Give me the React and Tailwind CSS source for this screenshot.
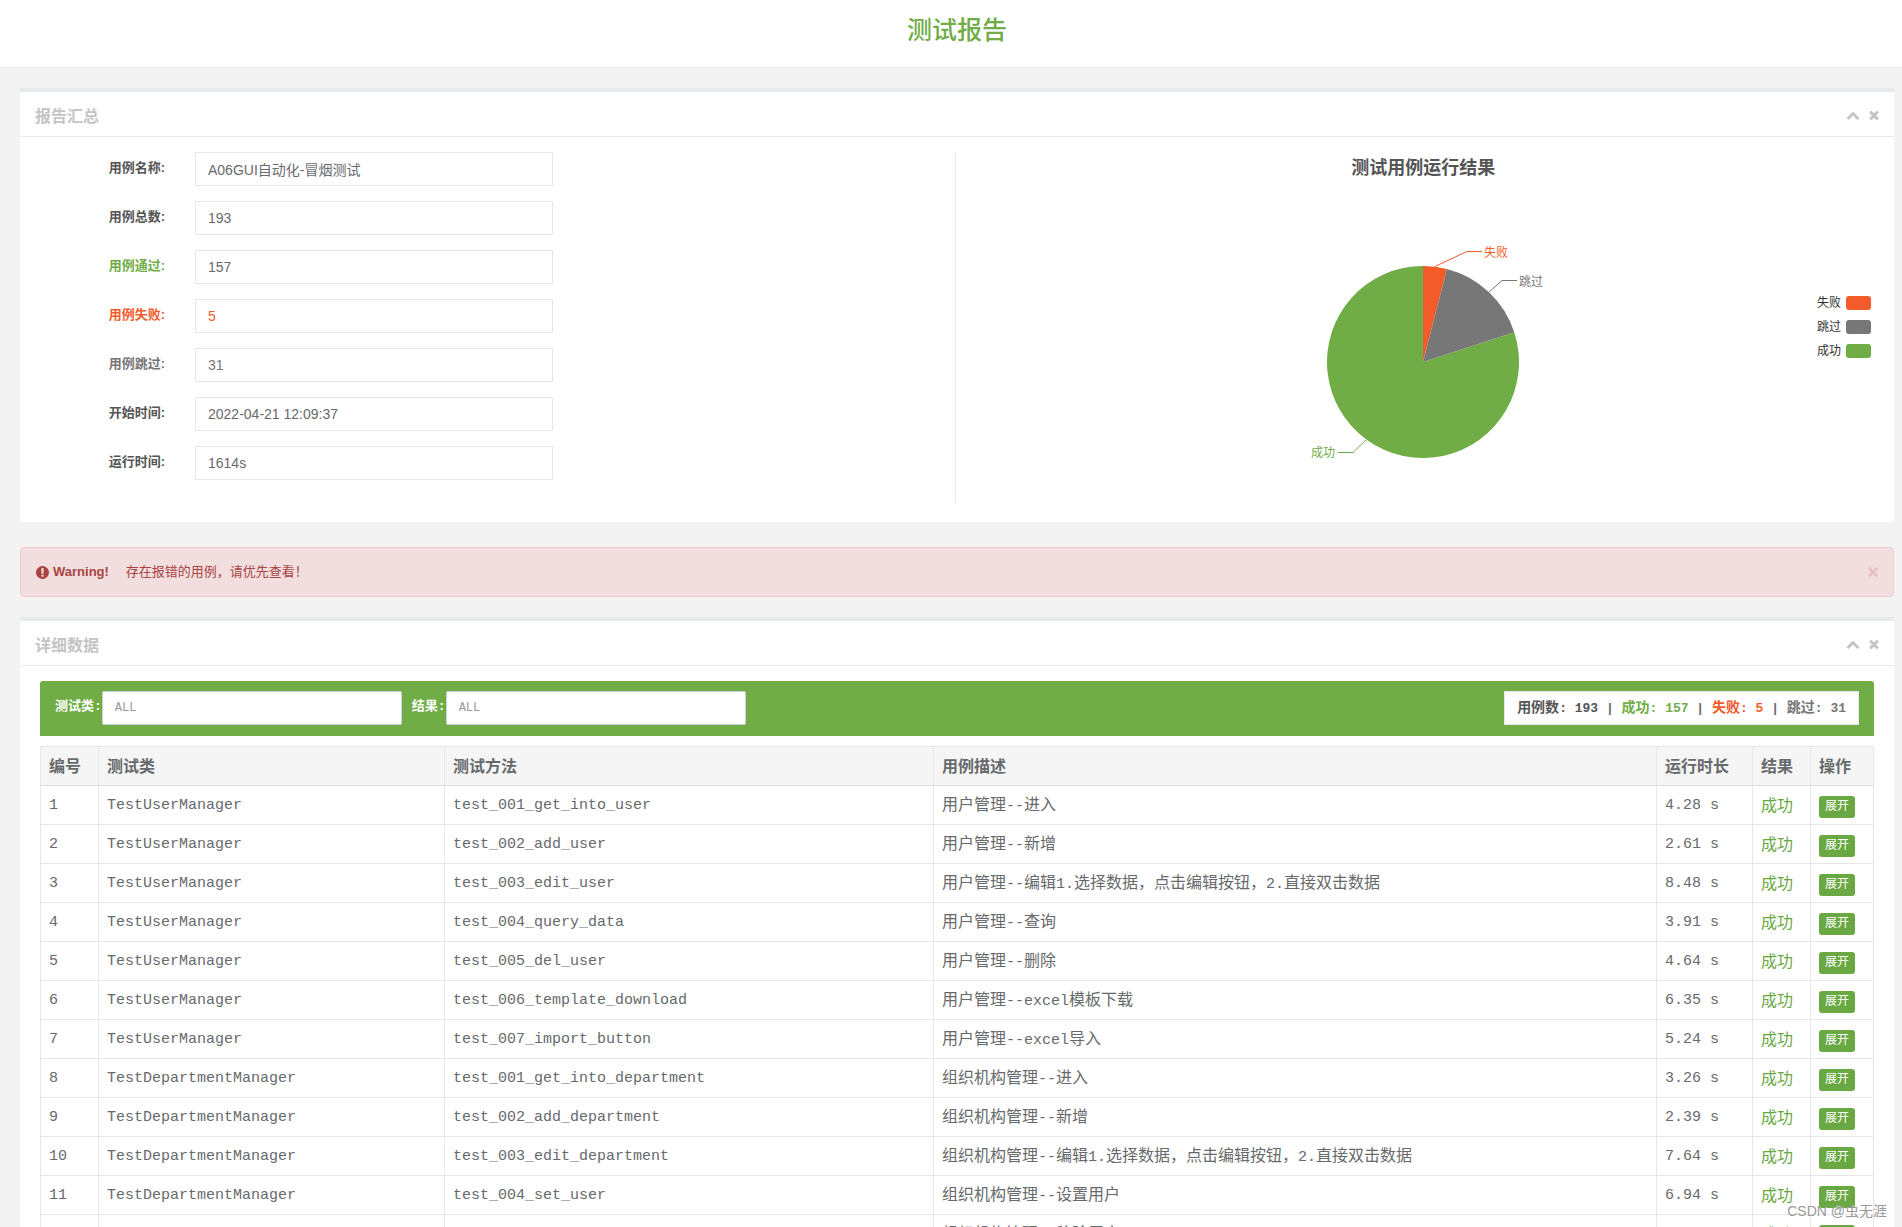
import { useState } from 'react'

const summary = [
  { id: 'name', label: '用例名称:', value: 'A06GUI自动化-冒烟测试', color: 'text-[#676a6c]', labelColor: 'text-[#555]' },
  { id: 'total', label: '用例总数:', value: '193', color: 'text-[#676a6c]', labelColor: 'text-[#555]' },
  { id: 'passed', label: '用例通过:', value: '157', color: 'text-[#676a6c]', labelColor: 'text-[#70ad47]' },
  { id: 'failed', label: '用例失败:', value: '5', color: 'text-[#f45b2a]', labelColor: 'text-[#f45b2a]' },
  { id: 'skipped', label: '用例跳过:', value: '31', color: 'text-[#777]', labelColor: 'text-[#777]' },
  { id: 'start', label: '开始时间:', value: '2022-04-21 12:09:37', color: 'text-[#676a6c]', labelColor: 'text-[#555]' },
  { id: 'duration', label: '运行时间:', value: '1614s', color: 'text-[#676a6c]', labelColor: 'text-[#555]' },
]

const rows = [
  ['TestUserManager', 'test_001_get_into_user', '用户管理--进入', '4.28'],
  ['TestUserManager', 'test_002_add_user', '用户管理--新增', '2.61'],
  ['TestUserManager', 'test_003_edit_user', '用户管理--编辑1.选择数据，点击编辑按钮，2.直接双击数据', '8.48'],
  ['TestUserManager', 'test_004_query_data', '用户管理--查询', '3.91'],
  ['TestUserManager', 'test_005_del_user', '用户管理--删除', '4.64'],
  ['TestUserManager', 'test_006_template_download', '用户管理--excel模板下载', '6.35'],
  ['TestUserManager', 'test_007_import_button', '用户管理--excel导入', '5.24'],
  ['TestDepartmentManager', 'test_001_get_into_department', '组织机构管理--进入', '3.26'],
  ['TestDepartmentManager', 'test_002_add_department', '组织机构管理--新增', '2.39'],
  ['TestDepartmentManager', 'test_003_edit_department', '组织机构管理--编辑1.选择数据，点击编辑按钮，2.直接双击数据', '7.64'],
  ['TestDepartmentManager', 'test_004_set_user', '组织机构管理--设置用户', '6.94'],
  ['TestDepartmentManager', 'test_005_del_user', '组织机构管理--移除用户', '5.12'],
]

const legend = [
  ['失败', 'bg-[#f45b2a]'],
  ['跳过', 'bg-[#777]'],
  ['成功', 'bg-[#70ad47]'],
]

const icons = {
  up: 'M1683 1331l-166 165q-19 19-45 19t-45-19l-531-531-531 531q-19 19-45 19t-45-19l-166-165q-19-19-19-45.5t19-45.5l742-741q19-19 45-19t45 19l742 741q19 19 19 45.5t-19 45.5z',
  times:
    'M1490 1322q0 40-28 68l-136 136q-28 28-68 28t-68-28l-294-294-294 294q-28 28-68 28t-68-28l-136-136q-28-28-28-68t28-68l294-294-294-294q-28-28-28-68t28-68l136-136q28-28 68-28t68 28l294 294 294-294q28-28 68-28t68 28l136 136q28 28 28 68t-28 68l-294 294 294 294q28 28 28 68z',
  alert:
    'M896 128q209 0 385.5 103t279.5 279.5 103 385.5-103 385.5-279.5 279.5-385.5 103-385.5-103-279.5-279.5-103-385.5 103-385.5 279.5-279.5 385.5-103zm128 1247v-190q0-14-9-23.5t-22-9.5h-192q-13 0-23 10t-10 23v190q0 13 10 23t23 10h192q13 0 22-9.5t9-23.5zm-2-344l18-621q0-12-10-18-10-8-24-8h-220q-14 0-24 8-10 6-10 18l17 621q0 10 10 17.5t24 7.5h185q14 0 23.5-7.5t10.5-17.5z',
}

function Icon({ name, className }) {
  return (
    <svg viewBox="0 0 1792 1792" fill="currentColor" aria-hidden="true" className={className}>
      <path d={icons[name]} />
    </svg>
  )
}

// Latin letters are wide in the monospace font, so they are set a step smaller than the Chinese text
function Mixed({ text, latin }) {
  return text.split(/([\x20-\x7e]+)/).map((part, i) =>
    i % 2 ? <span key={i} className={latin}>{part}</span> : part
  )
}

function Panel({ title, children }) {
  const [open, setOpen] = useState(true)
  const [closed, setClosed] = useState(false)
  if (closed) return null

  return (
    <section className="bg-white border-t-4 border-[#e7eaec]">
      <div className="h-[45px] flex items-center justify-between pl-[15px] pr-[13px] pt-0.5 border-b border-[#e7eaec] text-[#c4c4c4]">
        <h2 className="text-base leading-6 font-bold font-['Noto_Sans_CJK_SC',sans-serif]">{title}</h2>
        <div className="flex gap-[7px]">
          <button type="button" aria-label="折叠" onClick={() => setOpen(!open)}>
            <Icon name="up" className="size-3.5" />
          </button>
          <button type="button" aria-label="关闭" onClick={() => setClosed(true)}>
            <Icon name="times" className="size-3.5" />
          </button>
        </div>
      </div>
      {open && children}
    </section>
  )
}

function PieChart() {
  return (
    <div className="flex-1 flex flex-col pt-1">
      <h3 className="text-lg leading-6 font-bold text-center text-[#555]">测试用例运行结果</h3>
      <div className="grid grid-cols-[1fr_240px_1fr] items-center mt-[62px]">
        <svg
          viewBox="-120 -120 240 240"
          role="img"
          aria-label="测试用例运行结果"
          className="col-start-2 w-[240px] h-[240px] overflow-visible text-xs"
        >
          <path d="M0 0L91.3 -29.7A96 96 0 1 1 0 -96Z" fill="#70ad47" />
          <path d="M0 0L0 -96A96 96 0 0 1 23.9 -93Z" fill="#f45b2a" />
          <path d="M0 0L23.9 -93A96 96 0 0 1 91.3 -29.7Z" fill="#777" />
          <g fill="none" strokeWidth="1">
            <path d="M12 -95.5L44 -110.5H59" stroke="#f45b2a" />
            <path d="M66 -70L79 -81.5H94" stroke="#777" />
            <path d="M-57 78L-70 90.5H-85" stroke="#70ad47" />
          </g>
          <text x="61" y="-105" fill="#f45b2a">失败</text>
          <text x="96" y="-76" fill="#777">跳过</text>
          <text x="-88" y="95" textAnchor="end" fill="#70ad47">成功</text>
        </svg>
        <ul className="justify-self-end self-start flex flex-col gap-2.5 mt-[54px] mr-5">
          {legend.map(([name, color]) => (
            <li key={name} className="h-3.5 flex items-center gap-[5px] text-xs text-[#333]">
              {name}
              <span className={`w-[25px] h-3.5 rounded-[3px] ${color}`}></span>
            </li>
          ))}
        </ul>
      </div>
    </div>
  )
}

function Filter({ id, label }) {
  return (
    <div className="flex">
      <label htmlFor={id} className="pt-1.5 text-[13px] leading-5 font-bold text-white">
        {label}
      </label>
      <select
        id={id}
        className="appearance-none w-[300px] h-[34px] px-3 text-xs text-[#999] bg-white border border-[#c8d0dc] rounded-xs"
      >
        <option>ALL</option>
      </select>
    </div>
  )
}

export default function App() {
  const [warning, setWarning] = useState(true)

  return (
    <div className="relative h-screen overflow-hidden bg-[#f3f3f3] text-[#676a6c] font-['Liberation_Sans','Noto_Sans_CJK_SC',sans-serif]">
      <header className="h-[68px] bg-white border-b border-[#e7eaec] pt-2.5">
        <h1 className="text-[25px] leading-10 font-medium text-center text-[#70ad47] pl-3">测试报告</h1>
      </header>

      <main className="pt-5 pl-5 pr-2">
        <Panel title="报告汇总">
          <div className="flex pt-[15px] pb-[19px] pr-[3px] min-h-[385px]">
            <form className="w-1/2 flex flex-col gap-[15px] border-r border-[#e7eaec]">
              {summary.map((item) => (
                <div key={item.id} className="flex">
                  <label
                    htmlFor={item.id}
                    className={`w-[145px] mr-[30px] pt-1.5 text-[13px] leading-5 font-bold text-right ${item.labelColor}`}
                  >
                    {item.label}
                  </label>
                  <input
                    id={item.id}
                    readOnly
                    defaultValue={item.value}
                    className={`w-[358px] h-[34px] px-3 text-sm bg-white border border-[#e5e6e7] rounded-[1px] ${item.color}`}
                  />
                </div>
              ))}
            </form>
            <PieChart />
          </div>
        </Panel>

        {warning && (
          <div className="h-[50px] mt-[25px] flex items-center px-3.5 text-[13px] text-[#a94442] bg-[#f2dede] border border-[#ebccd1] rounded">
            <Icon name="alert" className="size-[15px] mr-[3px]" />
            <strong>Warning!</strong>
            <span className="ml-[17px]">存在报错的用例，请优先查看！</span>
            <button
              type="button"
              aria-label="关闭提示"
              onClick={() => setWarning(false)}
              className="ml-auto text-xl font-bold text-[#e3bfbf]"
            >
              ×
            </button>
          </div>
        )}

        <div className="mt-5 font-['Liberation_Mono','Noto_Sans_CJK_SC',monospace]">
          <Panel title="详细数据">
            <div className="px-5 py-[15px]">
              <div className="h-[55px] flex items-start gap-2.5 px-[15px] py-2.5 bg-[#70ad47] rounded-t-[3px]">
                <Filter id="test-class" label="测试类:" />
                <Filter id="result" label="结果:" />
                <p className="ml-auto h-[34px] px-3 text-sm leading-8 font-bold whitespace-pre bg-white border border-[#e5e6e7]">
                  <span className="text-[#555]"><Mixed text="用例数: 193" latin="text-[13px]" /></span>
                  <span className="text-[13px]"> | </span>
                  <span className="text-[#70ad47]"><Mixed text="成功: 157" latin="text-[13px]" /></span>
                  <span className="text-[13px]"> | </span>
                  <span className="text-[#f45b2a]"><Mixed text="失败: 5" latin="text-[13px]" /></span>
                  <span className="text-[13px]"> | </span>
                  <span className="text-[#777]"><Mixed text="跳过: 31" latin="text-[13px]" /></span>
                </p>
              </div>

              <table className="w-full table-fixed border-collapse mt-2.5 text-base text-left [&_td]:border [&_td]:border-[#e7e7e7] [&_td]:px-2 [&_td]:pt-[3px] [&_td]:pb-0 [&_th]:border [&_th]:border-[#e7e7e7] [&_th]:border-b-[#ddd] [&_th]:px-2 [&_th]:pt-[3px] [&_th]:pb-0">
                <thead>
                  <tr className="h-[39px] bg-[#f5f5f6]">
                    <th className="w-[58px]">编号</th>
                    <th className="w-[346px]">测试类</th>
                    <th className="w-[489px]">测试方法</th>
                    <th>用例描述</th>
                    <th className="w-24">运行时长</th>
                    <th className="w-[58px]">结果</th>
                    <th className="w-[63px]">操作</th>
                  </tr>
                </thead>
                <tbody>
                  {rows.map(([cls, method, desc, time], i) => (
                    <tr key={i} className="h-[39px]">
                      <td className="text-[15px]">{i + 1}</td>
                      <td className="text-[15px]">{cls}</td>
                      <td className="text-[15px]">{method}</td>
                      <td><Mixed text={desc} latin="text-[15px]" /></td>
                      <td className="text-[15px]">{time} s</td>
                      <td className="text-[#6aa844]">成功</td>
                      <td>
                        <button type="button" className="block w-9 h-[22px] text-xs text-white bg-[#6aa844] rounded-[3px]">
                          展开
                        </button>
                      </td>
                    </tr>
                  ))}
                </tbody>
              </table>
            </div>
          </Panel>
        </div>
      </main>

      <div className="absolute right-[15px] bottom-1 text-sm leading-6 text-[#999] text-shadow-[1px_1px_0_#ffffff99]">
        CSDN @虫无涯
      </div>
    </div>
  )
}
